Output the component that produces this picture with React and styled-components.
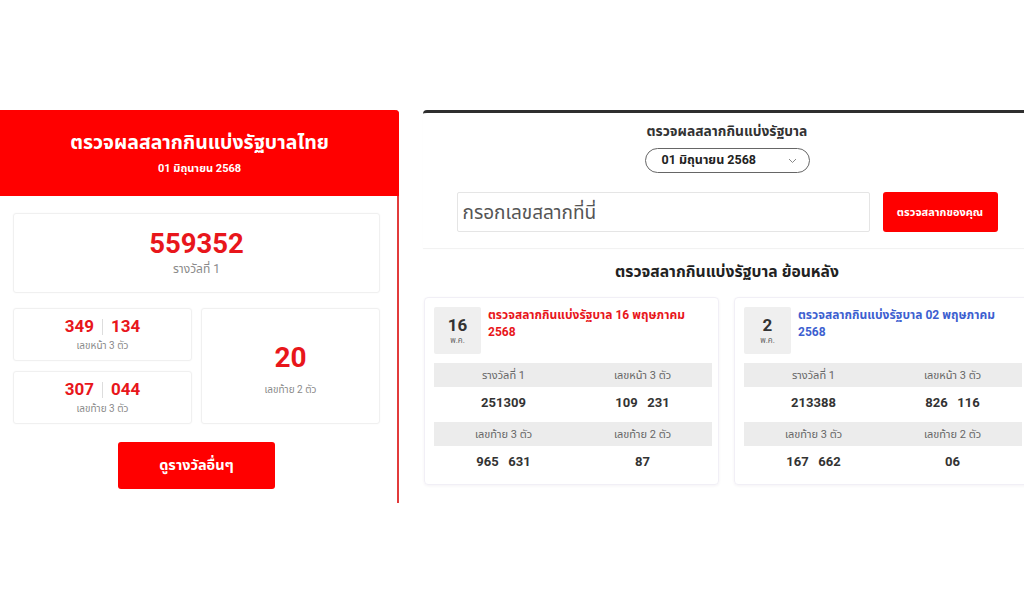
import React from "react";
import styled, { createGlobalStyle } from "styled-components";

const Global = createGlobalStyle`
  html, body { margin: 0; padding: 0; background: #fff; overflow: hidden; }
  body { font-family: Roboto, "Noto Sans Thai", "Noto Sans", "DejaVu Sans", sans-serif; }
  * { box-sizing: border-box; }
`;

const Page = styled.div`
  width: 1024px;
  height: 597px;
  overflow: hidden;
  display: flex;
  align-items: flex-start;
  padding-top: 110px;
`;

const LeftPanel = styled.section`
  width: 399px;
  height: 393px;
  flex: none;
  border-right: 2px solid #e23b3b;
  border-top-right-radius: 4px;
  display: flex;
  flex-direction: column;
`;

const RedHeader = styled.header`
  height: 86px;
  background: #ff0000;
  border-top-right-radius: 4px;
  margin-right: -2px;
  display: flex;
  flex-direction: column;
  align-items: center;
  justify-content: center;
  gap: 7px;
  color: #fff;
  font-weight: 700;
`;

const HeaderTitle = styled.div`
  font-size: 19.5px;
  line-height: 24px;
  padding-top: 1px;
`;

const HeaderDate = styled.div`
  font-size: 11px;
  line-height: 14px;
`;

const LeftBody = styled.div`
  padding: 17px 17px 0 13px;
  display: flex;
  flex-direction: column;
  gap: 14px;
`;

const PrizeCard = styled.div`
  border: 1px solid #f0f0f0;
  border-radius: 3px;
  box-shadow: 0 0 2px rgba(0, 0, 0, 0.04);
  display: flex;
  flex-direction: column;
  align-items: center;
  justify-content: center;
  height: ${(p) => p.$h}px;
  gap: ${(p) => p.$gap || 2}px;
  padding-top: ${(p) => p.$pt || 0}px;
`;

const BigNumber = styled.div`
  color: #e8161b;
  font-weight: 700;
  font-size: ${(p) => p.$size}px;
  line-height: 1.1;
  display: flex;
  align-items: center;
  gap: 8px;
`;

const Divider = styled.span`
  width: 1px;
  height: 16px;
  background: #ddd;
`;

const PrizeLabel = styled.div`
  color: #8a8a8a;
  font-size: ${(p) => p.$size || 10}px;
  line-height: 1.2;
`;

const PrizeGrid = styled.div`
  display: grid;
  grid-template-columns: 179px 179px;
  column-gap: 9px;
  margin-top: 1px;
`;

const StackCol = styled.div`
  display: flex;
  flex-direction: column;
  gap: 10px;
`;

const OtherButton = styled.button`
  align-self: center;
  margin-top: 4px;
  width: 157px;
  height: 47px;
  background: #ff0000;
  border: none;
  border-radius: 3px;
  color: #fff;
  font-family: inherit;
  font-weight: 700;
  font-size: 14.5px;
`;

const RightPanel = styled.section`
  width: 608px;
  flex: none;
  margin-left: 24px;
  display: flex;
  flex-direction: column;
`;

const SearchBox = styled.div`
  border-top: 3px solid #2e2e2e;
  border-top-left-radius: 4px;
  height: 138px;
  box-shadow: 0 1px 1px rgba(0, 0, 0, 0.06);
  display: flex;
  flex-direction: column;
  align-items: center;
  padding-top: 9px;
`;

const SearchTitle = styled.div`
  font-size: 13.8px;
  font-weight: 700;
  color: #333;
  line-height: 18px;
`;

const Select = styled.div`
  margin-top: 8px;
  width: 165px;
  height: 25px;
  border: 1px solid #666;
  border-radius: 13px;
  display: flex;
  align-items: center;
  padding: 0 12px 0 16px;
  font-size: 12.5px;
  font-weight: 700;
  color: #222;
  justify-content: space-between;
`;

const InputRow = styled.div`
  margin-top: 19px;
  display: flex;
  gap: 13px;
`;

const Input = styled.input`
  width: 413px;
  height: 40px;
  border: 1px solid #e5e5e5;
  border-radius: 2px;
  padding: 0 5px;
  font-family: inherit;
  font-size: 19px;
  color: #555;
  &::placeholder { color: #555; }
  outline: none;
`;

const CheckButton = styled.button`
  width: 115px;
  height: 40px;
  background: #ff0000;
  border: none;
  border-radius: 3px;
  color: #fff;
  font-family: inherit;
  font-size: 11px;
  font-weight: 700;
`;

const HistoryTitle = styled.h2`
  margin: 13px 0 0;
  text-align: center;
  font-size: 15.7px;
  font-weight: 700;
  color: #222;
  line-height: 21px;
`;

const CardRow = styled.div`
  margin-top: 15px;
  display: grid;
  grid-template-columns: 295px 295px;
  column-gap: 15px;
  padding-left: 1px;
`;

const DrawCard = styled.article`
  height: 188px;
  border: 1px solid #f1eff6;
  border-radius: 4px;
  box-shadow: 0 1px 3px rgba(60, 40, 90, 0.06);
  padding: 9px 8px 0 9px;
`;

const CardHead = styled.div`
  display: flex;
  gap: 7px;
  align-items: flex-start;
`;

const DateBox = styled.div`
  width: 47px;
  height: 47px;
  flex: none;
  background: #efefef;
  border-radius: 2px;
  display: flex;
  flex-direction: column;
  align-items: center;
  justify-content: center;
  color: #333;
`;

const DateDay = styled.div`
  font-size: 17px;
  font-weight: 700;
  line-height: 19px;
  margin-top: 2px;
`;

const DateMonth = styled.div`
  font-size: 8px;
  color: #666;
  line-height: 12px;
`;

const CardTitle = styled.div`
  color: ${(p) => p.$color};
  font-size: 12px;
  font-weight: 700;
  line-height: 17px;
  max-width: 215px;
`;

const ResultTable = styled.div`
  margin-top: 9px;
  display: grid;
  grid-template-columns: 1fr 1fr;
  width: 278px;
`;

const HeadCell = styled.div`
  background: #ececec;
  height: 24px;
  display: flex;
  align-items: center;
  justify-content: center;
  font-size: 11px;
  color: #666;
  margin-top: ${(p) => (p.$second ? 4 : 0)}px;
`;

const ValueCell = styled.div`
  height: 31px;
  display: flex;
  align-items: center;
  justify-content: center;
  font-size: 13px;
  font-weight: 700;
  color: #333;
  white-space: pre;
`;

const Chevron = () => (
  <svg width="9" height="6" viewBox="0 0 9 6" fill="none">
    <path d="M1 1l3.5 3.5L8 1" stroke="#888" strokeWidth="1" />
  </svg>
);

const draws = [
  {
    day: "16",
    title: "ตรวจสลากกินแบ่งรัฐบาล 16 พฤษภาคม 2568",
    color: "#e8161b",
    first: "251309",
    front: "109   231",
    back3: "965   631",
    back2: "87",
  },
  {
    day: "2",
    title: "ตรวจสลากกินแบ่งรัฐบาล 02 พฤษภาคม 2568",
    color: "#3d5fd0",
    first: "213388",
    front: "826   116",
    back3: "167   662",
    back2: "06",
  },
];

export default function App() {
  return (
    <>
      <Global />
      <Page>
        <LeftPanel>
          <RedHeader>
            <HeaderTitle>ตรวจผลสลากกินแบ่งรัฐบาลไทย</HeaderTitle>
            <HeaderDate>01 มิถุนายน 2568</HeaderDate>
          </RedHeader>
          <LeftBody>
            <PrizeCard $h={80} $gap={3}>
              <BigNumber $size={27.5}>559352</BigNumber>
              <PrizeLabel $size={12}>รางวัลที่ 1</PrizeLabel>
            </PrizeCard>
            <PrizeGrid>
              <StackCol>
                <PrizeCard $h={53} $gap={4}>
                  <BigNumber $size={17}>
                    349<Divider />134
                  </BigNumber>
                  <PrizeLabel>เลขหน้า 3 ตัว</PrizeLabel>
                </PrizeCard>
                <PrizeCard $h={53} $gap={4}>
                  <BigNumber $size={17}>
                    307<Divider />044
                  </BigNumber>
                  <PrizeLabel>เลขท้าย 3 ตัว</PrizeLabel>
                </PrizeCard>
              </StackCol>
              <PrizeCard $h={116} $gap={10} $pt={7}>
                <BigNumber $size={28}>20</BigNumber>
                <PrizeLabel>เลขท้าย 2 ตัว</PrizeLabel>
              </PrizeCard>
            </PrizeGrid>
            <OtherButton>ดูรางวัลอื่นๆ</OtherButton>
          </LeftBody>
        </LeftPanel>

        <RightPanel>
          <SearchBox>
            <SearchTitle>ตรวจผลสลากกินแบ่งรัฐบาล</SearchTitle>
            <Select>
              <span>01 มิถุนายน 2568</span>
              <Chevron />
            </Select>
            <InputRow>
              <Input placeholder="กรอกเลขสลากที่นี่" />
              <CheckButton>ตรวจสลากของคุณ</CheckButton>
            </InputRow>
          </SearchBox>
          <HistoryTitle>ตรวจสลากกินแบ่งรัฐบาล ย้อนหลัง</HistoryTitle>
          <CardRow>
            {draws.map((d) => (
              <DrawCard key={d.day}>
                <CardHead>
                  <DateBox>
                    <DateDay>{d.day}</DateDay>
                    <DateMonth>พ.ค.</DateMonth>
                  </DateBox>
                  <CardTitle $color={d.color}>{d.title}</CardTitle>
                </CardHead>
                <ResultTable>
                  <HeadCell>รางวัลที่ 1</HeadCell>
                  <HeadCell>เลขหน้า 3 ตัว</HeadCell>
                  <ValueCell>{d.first}</ValueCell>
                  <ValueCell>{d.front}</ValueCell>
                  <HeadCell $second>เลขท้าย 3 ตัว</HeadCell>
                  <HeadCell $second>เลขท้าย 2 ตัว</HeadCell>
                  <ValueCell>{d.back3}</ValueCell>
                  <ValueCell>{d.back2}</ValueCell>
                </ResultTable>
              </DrawCard>
            ))}
          </CardRow>
        </RightPanel>
      </Page>
    </>
  );
}
